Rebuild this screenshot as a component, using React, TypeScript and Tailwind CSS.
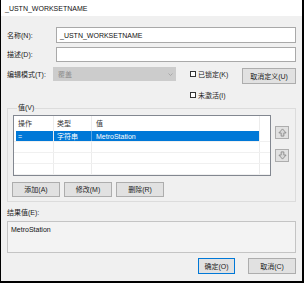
import { FC, ReactNode } from 'react';

const FONT = '"Liberation Sans", "Noto Sans CJK SC", sans-serif';

interface BtnProps {
  children: ReactNode;
  className?: string;
}

const Btn: FC<BtnProps> = ({ children, className = '' }) => (
  <div
    className={`flex items-center justify-center border border-[#adadad] bg-[#e1e1e1] text-[#222] ${className}`}
  >
    {children}
  </div>
);

const Check: FC<{ label: string }> = ({ label }) => (
  <div className="flex items-center gap-[2px] text-[#222]">
    <div className="w-[6px] h-[6px] border border-[#333] bg-white" />
    <span>{label}</span>
  </div>
);

const Arrow: FC<{ down?: boolean }> = ({ down }) => (
  <Btn className="w-[14px] h-[13px]">
    <svg width="9" height="9" viewBox="0 0 10 10" className={down ? 'rotate-180' : ''}>
      <path d="M5 1 L9 5.5 H6.5 V9 H3.5 V5.5 H1 Z" fill="#d8d8d8" stroke="#8a8a8a" strokeWidth="1" />
    </svg>
  </Btn>
);

const rows = [
  { op: '=', type: '字符串', value: 'MetroStation', selected: true },
  { op: '', type: '', value: '', selected: false },
  { op: '', type: '', value: '', selected: false },
  { op: '', type: '', value: '', selected: false },
];

const App: FC = () => {
  return (
    <div
      className="w-[304px] h-[283px] flex flex-col bg-[#f0f0f0] border-l border-r-2 border-b-2 border-black text-[7px] leading-none overflow-hidden"
      style={{ fontFamily: FONT }}
    >
      <div className="h-[16px] bg-white flex items-center pl-[4px] text-[#111]">_USTN_WORKSETNAME</div>

      <div className="flex flex-col px-[6px]">
        <div className="mt-[11px] h-[16px] flex items-center">
          <div className="w-[49px] text-[#222]">名称(N):</div>
          <div className="flex-1 h-full flex items-center border border-[#a9a9a9] bg-white pl-[3px] text-[#111]">
            _USTN_WORKSETNAME
          </div>
        </div>

        <div className="mt-[4px] h-[15px] flex items-center">
          <div className="w-[49px] text-[#222]">描述(D):</div>
          <div className="flex-1 h-full border border-[#a9a9a9] bg-white" />
        </div>

        <div className="mt-[5px] h-[17px] flex items-start">
          <div className="w-[46px] h-[14px] flex items-center text-[#222]">编辑模式(T):</div>
          <div className="w-[123px] h-[14px] flex items-center justify-between bg-[#cccccc] pl-[5px] pr-[3px] text-[#8c8c8c]">
            <span>覆盖</span>
            <svg width="5" height="3" viewBox="0 0 5 3">
              <path d="M0.5 0.5 L2.5 2.5 L4.5 0.5" fill="none" stroke="#a0a0a0" strokeWidth="0.8" />
            </svg>
          </div>
          <div className="ml-[14px] h-[14px] flex items-center">
            <Check label="已锁定(K)" />
          </div>
          <Btn className="ml-auto mt-[1px] w-[54px] h-[16px]">取消定义(U)</Btn>
        </div>

        <div className="mt-[6px] h-[10px] ml-[183px] flex items-center">
          <Check label="未激活(I)" />
        </div>

        <fieldset className="mt-[3px] border border-[#dcdcdc] pl-[5px] pr-[6px] pb-[4px]">
          <legend className="ml-[4px] px-[1px] h-[10px] leading-[10px] text-[#222]">值(V)</legend>
          <div className="flex items-start mt-[2px]">
            <div className="w-[258px] h-[61px] border border-[#828790] bg-white flex flex-col">
              <div className="h-[15px] flex text-[#333]">
                <div className="w-[40px] border-r border-[#ececec] flex items-center pl-[4px]">操作</div>
                <div className="w-[38px] border-r border-[#ececec] flex items-center pl-[3px]">类型</div>
                <div className="w-[168px] border-r border-[#ececec] flex items-center pl-[4px]">值</div>
              </div>
              {rows.map((r, i) => (
                <div key={i} className="h-[11px] flex border-b border-[#f0f0f0]">
                  <div className="w-[40px] border-r border-[#ececec] flex">
                    <div
                      className={`ml-[2px] flex-1 flex items-center pl-[2px] ${
                        r.selected ? 'bg-[#0078d7] text-white' : ''
                      }`}
                    >
                      {r.op}
                    </div>
                  </div>
                  <div
                    className={`w-[38px] border-r flex items-center pl-[3px] ${
                      r.selected ? 'bg-[#0078d7] text-white border-[#5aa3e3]' : 'border-[#ececec]'
                    }`}
                  >
                    {r.type}
                  </div>
                  <div
                    className={`w-[168px] border-r border-[#ececec] flex items-center pl-[4px] ${
                      r.selected ? 'bg-[#0078d7] text-white' : ''
                    }`}
                  >
                    {r.value}
                  </div>
                </div>
              ))}
            </div>
            <div className="ml-[4px] flex flex-col">
              <div className="mt-[11px]">
                <Arrow />
              </div>
              <div className="mt-[10px]">
                <Arrow down />
              </div>
            </div>
          </div>
          <div className="mt-[6px] ml-[-1px] flex gap-[4px]">
            <Btn className="w-[48px] h-[15px]">添加(A)</Btn>
            <Btn className="w-[48px] h-[15px]">修改(M)</Btn>
            <Btn className="w-[48px] h-[15px]">删除(R)</Btn>
          </div>
        </fieldset>

        <div className="mt-[5px] h-[10px] flex items-center text-[#222]">结果值(E):</div>
        <div className="mt-[4px] h-[32px] border border-[#c4c4c4] bg-[#f3f3f3] pl-[3px] pt-[4px] text-[#111]">
          MetroStation
        </div>

        <div className="mt-[5px] flex justify-end gap-[13px]">
          <Btn className="w-[37px] h-[16px] !border-[#0078d7]">确定(O)</Btn>
          <Btn className="w-[48px] h-[16px]">取消(C)</Btn>
        </div>
      </div>
    </div>
  );
};

export default App;
